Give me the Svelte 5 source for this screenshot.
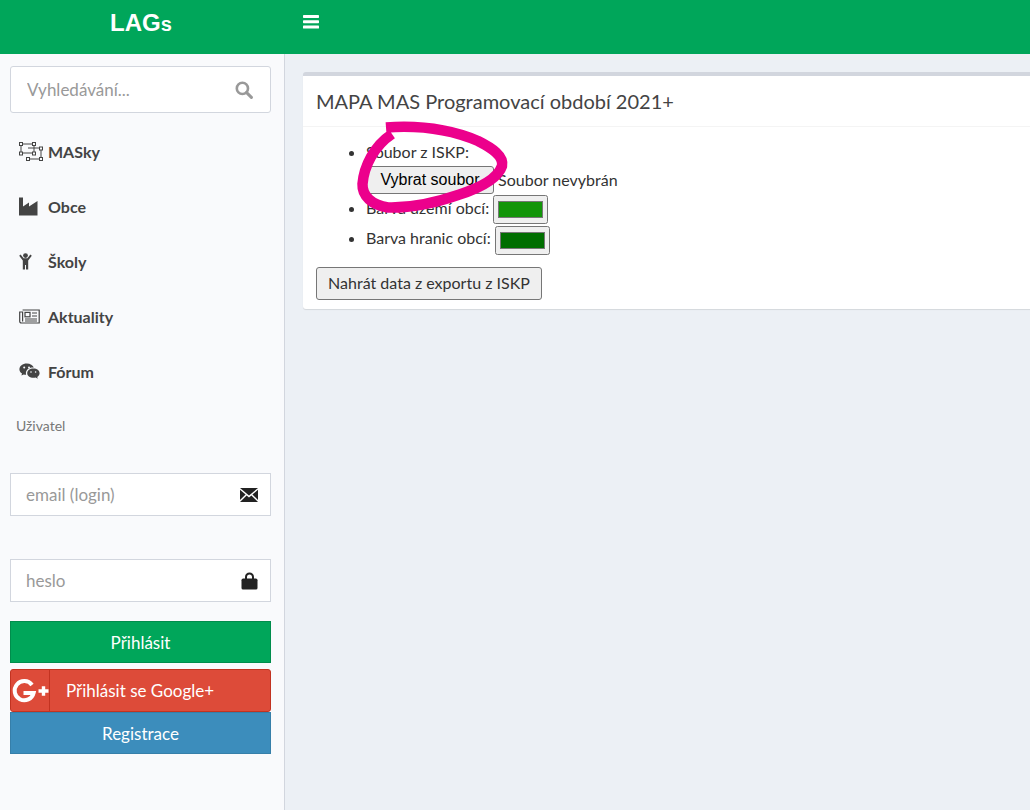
<script>
  const menu = [
    { label: "MASky", icon: "ungroup" },
    { label: "Obce", icon: "industry" },
    { label: "Školy", icon: "child" },
    { label: "Aktuality", icon: "news" },
    { label: "Fórum", icon: "chat" }
  ];
</script>

<div class="page">
  <header class="topbar">
    <div class="logo"><b>LAG</b><span>s</span></div>
    <svg class="bars" width="16" height="14" viewBox="0 0 16 14" fill="#fff">
      <rect y="0" width="16" height="3" rx="0.7" />
      <rect y="5.3" width="16" height="3" rx="0.7" />
      <rect y="10.6" width="16" height="3" rx="0.7" />
    </svg>
  </header>

  <div class="main">
    <aside class="sidebar">
      <div class="search">
        <input placeholder="Vyhledávání..." />
        <svg width="18" height="18" viewBox="0 0 18 18" fill="none" stroke="#999" stroke-width="2.6">
          <circle cx="7.4" cy="7.4" r="5.6" />
          <path d="M11.6 11.6 L16.4 16.4" stroke-linecap="round" stroke-width="3" />
        </svg>
      </div>

      <ul class="menu">
        {#each menu as item}
          <li>
            <span class="ico">
              {#if item.icon === "ungroup"}
                <svg width="24" height="20" viewBox="0 0 24 20" fill="none" stroke="#444" stroke-width="1">
                  <path d="M2 2 H15 V11 H2 Z M9 6 H22 V17 H9" />
                  <g fill="#f9fafc">
                    <rect x="0.5" y="0.5" width="3" height="3" />
                    <rect x="13.5" y="0.5" width="3" height="3" />
                    <rect x="0.5" y="10" width="3" height="3" />
                    <rect x="13.5" y="10" width="3" height="3" />
                    <rect x="20.5" y="5" width="3" height="3" />
                    <rect x="20.5" y="15.5" width="3" height="3" />
                    <rect x="7.5" y="15.5" width="3" height="3" />
                  </g>
                </svg>
              {:else if item.icon === "industry"}
                <svg width="19" height="19" viewBox="0 0 19 19" fill="#444">
                  <path d="M0 0.5 H4 V9.5 L10 5.5 V9.5 L18.5 4 V18.5 H0 Z" />
                </svg>
              {:else if item.icon === "child"}
                <svg width="13" height="17" viewBox="0 0 13 17" fill="#444">
                  <circle cx="6.5" cy="2.6" r="2.4" />
                  <path d="M0.2 2.8 L1.6 1.6 L4.6 5.2 H8.4 L11.4 1.6 L12.8 2.8 L9.2 7.4 V16.6 H7 V12 H6 V16.6 H3.8 V7.4 Z" />
                </svg>
              {:else if item.icon === "news"}
                <svg width="21" height="15" viewBox="0 0 21 15" fill="none" stroke="#444" stroke-width="1.2">
                  <path d="M3.6 1 H20.2 V14 H2.4 C1.4 14 0.7 13.3 0.7 12.2 V3 H3.6 V12.4" />
                  <rect x="6" y="3.4" width="5" height="4.4" />
                  <path d="M13 4 H18 M13 7 H18 M6 10 H18 M6 12 H18" />
                </svg>
              {:else}
                <svg width="21" height="17" viewBox="0 0 21 17" fill="#444">
                  <path d="M7.8 0.4 C3.6 0.4 0.4 3 0.4 6.2 C0.4 8 1.4 9.6 3 10.6 L2.4 12.6 L4.8 11.4 C5.6 11.6 6.2 11.8 7.2 11.8 C7 11.2 6.9 10.6 6.9 10 C6.9 6.8 9.9 4.4 13.6 4.4 L14.8 4.5 C14 2.1 11.2 0.4 7.8 0.4 Z" />
                  <path d="M20.6 10.2 C20.6 7.5 17.9 5.6 14.4 5.6 C10.9 5.6 8.2 7.6 8.2 10.2 C8.2 12.8 10.9 14.8 14.4 14.8 C15.2 14.8 15.9 14.7 16.6 14.5 L18.8 15.8 L18.2 13.9 C19.7 12.9 20.6 11.6 20.6 10.2 Z" />
                  <circle cx="5.2" cy="4.4" r="1" fill="#f9fafc" />
                  <circle cx="10" cy="4.4" r="1" fill="#f9fafc" />
                  <circle cx="12" cy="9" r="0.8" fill="#f9fafc" />
                  <circle cx="16.6" cy="9" r="0.8" fill="#f9fafc" />
                </svg>
              {/if}
            </span>
            {item.label}
          </li>
        {/each}
      </ul>

      <div class="section">Uživatel</div>

      <div class="field first">
        <input placeholder="email (login)" />
        <svg width="18" height="14" viewBox="0 0 18 14" fill="#222">
          <path d="M0 0 H18 L9 7.4 Z" />
          <path d="M0 1.8 L5.6 6.5 L0 12 Z M18 1.8 L12.4 6.5 L18 12 Z" />
          <path d="M0 14 L6.6 7.4 L9 9.4 L11.4 7.4 L18 14 Z" />
        </svg>
      </div>
      <div class="field second">
        <input placeholder="heslo" />
        <svg width="17" height="18" viewBox="0 0 17 18" fill="#222">
          <path d="M4 7 V5 C4 2.4 6 0.6 8.5 0.6 C11 0.6 13 2.4 13 5 V7 H11 V5 C11 3.5 10 2.6 8.5 2.6 C7 2.6 6 3.5 6 5 V7 Z" />
          <rect x="0.5" y="6.6" width="16" height="11" rx="1.6" />
        </svg>
      </div>

      <div class="btn login">Přihlásit</div>
      <div class="btn google">
        <span class="gicon">
          <svg width="38" height="26" viewBox="0 0 38 26" fill="none">
            <path d="M21 7 A9.6 9.6 0 1 0 22.6 15 H12.5" stroke="#fff" stroke-width="4" />
            <path d="M27.5 13 H37.5 M32.5 8.2 V17.8" stroke="#fff" stroke-width="3.4" />
          </svg>
        </span>
        <span class="glabel">Přihlásit se Google+</span>
      </div>
      <div class="btn register">Registrace</div>
    </aside>

    <main class="content">
      <section class="card">
        <h3>MAPA MAS Programovací období 2021+</h3>
        <div class="card-body">
          <ul class="form">
            <li>
              Soubor z ISKP:<br />
              <span class="filebtn">Vybrat soubor</span> Soubor nevybrán
            </li>
            <li>Barva území obcí: <input class="color" type="color" value="#129509" /></li>
            <li>Barva hranic obcí: <input class="color" type="color" value="#006e00" /></li>
          </ul>
          <button class="upload">Nahrát data z exportu z ISKP</button>
        </div>
      </section>
    </main>
  </div>

  <svg class="scribble" width="170" height="110" viewBox="350 115 170 110" fill="none">
    <path
      d="M386 127.500 C420 125 452 130 478 141 C492 148 504 156 502 166 C498 178 480 188 458 195 C432 204 408 208 388 207.500 C372 205 362 196 362.500 184 C364 166 374 146 392 134"
      stroke="#ec008c"
      stroke-width="10.500"
    />
  </svg>
</div>

<style>
  :global(body) {
    margin: 0;
    background: #ecf0f5;
    font-family: "Lato", "Liberation Sans", sans-serif;
    color: #333;
    overflow: hidden;
  }
  .page {
    position: relative;
    width: 1030px;
    height: 810px;
    overflow: hidden;
  }
  .topbar {
    height: 54px;
    background: #00a65a;
    display: flex;
    align-items: flex-start;
  }
  .logo {
    width: 285px;
    padding-top: 7px;
    text-align: center;
    color: #fff;
    font-family: "Liberation Sans", Arial, sans-serif;
    font-size: 24px;
    line-height: 32px;
    box-sizing: border-box;
    padding-left: 0;
    padding-right: 3px;
    font-weight: bold;
  }
  .logo span {
    font-size: 20px;
  }
  .bars {
    margin: 15px 0 0 18px;
  }
  .main {
    display: flex;
    height: 756px;
  }
  .sidebar {
    width: 285px;
    box-sizing: border-box;
    background: #f9fafc;
    border-right: 1px solid #d2d6de;
    padding: 12px 13px 0 10px;
  }
  .search {
    height: 47px;
    box-sizing: border-box;
    background: #fff;
    border: 1px solid #d2d6de;
    border-radius: 3px;
    display: flex;
    align-items: center;
    padding: 0 17px 0 16px;
  }
  input {
    font: inherit;
  }
  .search input,
  .field input {
    flex: 1;
    min-width: 0;
    border: 0;
    outline: 0;
    padding: 0;
    background: transparent;
    font-size: 17px;
  }
  input::placeholder {
    color: #999;
    opacity: 1;
  }
  .menu {
    list-style: none;
    margin: 11px 0 0;
    padding: 0;
  }
  .menu li {
    height: 55px;
    display: flex;
    align-items: center;
    font-size: 16px;
    font-weight: 700;
    color: #444;
    padding-left: 9px;
  }
  .ico {
    width: 29px;
    flex: none;
    display: flex;
    align-items: center;
  }
  .section {
    font-size: 14px;
    color: #777;
    margin: 17px 0 0 6px;
    line-height: 20px;
  }
  .field {
    height: 43px;
    box-sizing: border-box;
    background: #fff;
    border: 1px solid #d2d6de;
    display: flex;
    align-items: center;
    padding: 0 12px 0 15px;
  }
  .field.first {
    margin-top: 37px;
  }
  .field.second {
    margin-top: 43px;
  }
  .btn {
    height: 42px;
    box-sizing: border-box;
    border: 1px solid transparent;
    color: #fff;
    font-size: 17px;
    display: flex;
    align-items: center;
    justify-content: center;
  }
  .login {
    margin-top: 19px;
    background: #00a65a;
    border-color: #008d4c;
  }
  .google {
    margin-top: 6px;
    height: 43px;
    background: #dd4b39;
    border-color: #c23321;
    border-radius: 3px;
    justify-content: flex-start;
  }
  .gicon {
    width: 39px;
    height: 100%;
    flex: none;
    box-sizing: border-box;
    border-right: 1px solid #c23321;
    display: flex;
    align-items: center;
    overflow: hidden;
  }
  .glabel {
    margin-left: 16px;
  }
  .register {
    background: #3c8dbc;
    border-color: #367fa9;
  }
  .content {
    flex: 1;
    padding: 18px 0 0 18px;
    min-width: 0;
  }
  .card {
    width: 740px;
    background: #fff;
    border-top: 4px solid #d2d6de;
    border-radius: 3px;
    box-shadow: 0 1px 1px rgba(0, 0, 0, 0.1);
    height: 237px;
    box-sizing: border-box;
  }
  h3 {
    margin: 0;
    height: 51px;
    box-sizing: border-box;
    border-bottom: 1px solid #f4f4f4;
    padding: 0 13px;
    font-size: 20px;
    font-weight: 400;
    line-height: 50px;
    color: #444;
  }
  .card-body {
    padding: 11px 13px;
    font-size: 16px;
    line-height: 28px;
  }
  .form {
    margin: 0 0 12px;
    padding-left: 50px;
  }
  .form li {
    color: #333;
  }
  .filebtn {
    display: inline-block;
    height: 28px;
    box-sizing: border-box;
    width: 128px;
    border: 1px solid #767676;
    border-radius: 3px;
    background: #efefef;
    color: #000;
    font-family: "Liberation Sans", Arial, sans-serif;
    font-size: 16px;
    line-height: 26px;
    text-align: center;
    vertical-align: bottom;
  }
  .color {
    width: 55px;
    height: 29px;
    box-sizing: border-box;
    padding: 1px 2px;
    margin: 0;
    vertical-align: middle;
  }
  .upload {
    font: inherit;
    color: #333;
    font-size: 16px;
    height: 33px;
    width: 226px;
    padding: 0;
    background: #efefef;
    border: 1px solid #767676;
    border-radius: 3px;
  }
  .scribble {
    position: absolute;
    left: 350px;
    top: 115px;
    pointer-events: none;
    z-index: 2;
  }
</style>
